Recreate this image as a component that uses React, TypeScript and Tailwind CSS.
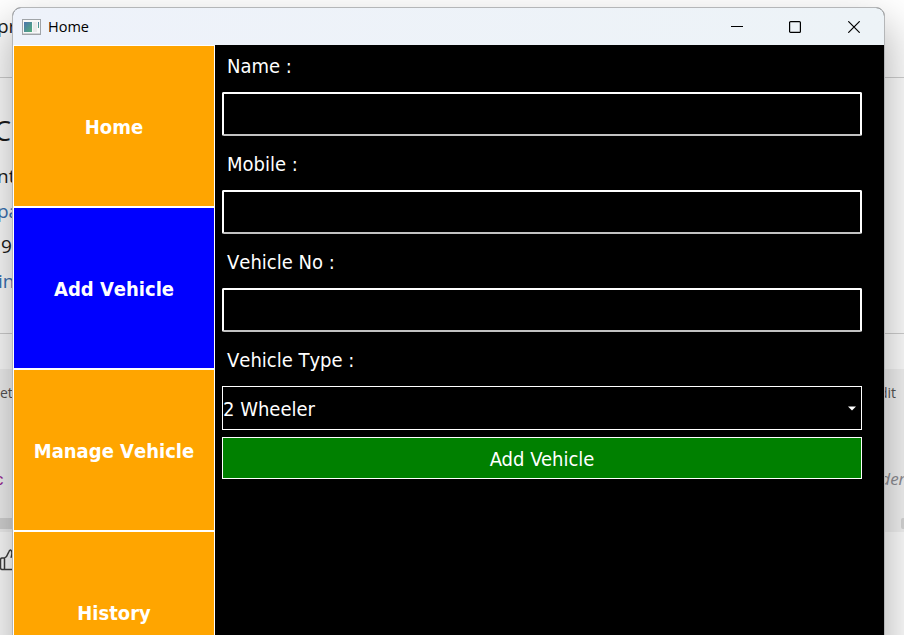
import React from 'react';

const ui = "[font-family:Open_Sans,Noto_Sans,sans-serif]";
const form = "[font-family:DejaVu_Sans_Condensed,DejaVu_Sans,sans-serif] [font-stretch:condensed] [font-kerning:none]";

function PageBehind() {
  return (
    <div className={`flex h-[635px] w-[904px] flex-col overflow-hidden bg-white whitespace-nowrap text-[#1b1b1b] ${ui}`}>
      <div className="h-[77px] pt-[13px] text-[19px] leading-[27px]"><span className="-ml-[3px]">pr</span></div>
      <div className="h-[257px] border-y border-[#d0d0d0] pt-[31px]">
        <div className="-ml-[6px] h-[50px] text-[27px] leading-[44px] font-medium">C</div>
        <div className="-ml-[3px] h-[35px] text-[19px] leading-[35px]">nt</div>
        <div className="-ml-[3px] h-[35px] text-[19px] leading-[35px] text-[#3b72b4]">pa</div>
        <div className="ml-[1px] h-[35px] text-[19px] leading-[35px]">9</div>
        <div className="-ml-[2px] h-[35px] text-[19px] leading-[35px] text-[#3b72b4]">in</div>
      </div>
      <div className="mt-[35px] flex h-[163px] flex-col bg-[#f3f3f3]">
        <div className="flex h-[46px] items-center justify-between pr-[8px] text-[14px] text-[#555]">
          <span>et</span><span>Edit</span>
        </div>
        <div className="mt-[53px] flex h-[22px] items-center justify-between">
          <span className="-ml-[6px] pt-[3px] [font-family:Liberation_Mono,monospace] text-[17px] text-[#9b1f95]">c</span>
          <span className="-mr-[10px] text-[17px] text-[#8e8e93] italic">dent</span>
        </div>
        <div className="mt-[28px] flex h-[11px] justify-between">
          <div className="w-[300px] bg-[#d6d6d6]" />
          <div className="w-[3px] rounded-l-[2px] bg-[#d6d6d6]" />
        </div>
      </div>
      <svg className="mt-[16px] ml-[-1px] h-[24px] w-[24px]" viewBox="0 0 24 24" fill="none" stroke="#3d3d3d" strokeWidth="1.500">
        <path d="M5.500 10H3Q1.500 10 1.500 12v7.500Q1.500 21.500 3 21.500h2.500zM5.500 10l2-1.500 2.500-5Q11 1 12.500 3q1 1.500-.2 6H20v12.500H5.500" />
      </svg>
    </div>
  );
}

function TitleBar() {
  return (
    <header className={`flex h-[37px] items-center bg-linear-to-r from-[#eef2fa] to-[#edf3f7] text-black ${ui}`}>
      <svg className="ml-[9px]" width="19" height="16" viewBox="0 0 19 16">
        <defs>
          <linearGradient id="pane" x1="0" y1="0" x2="1" y2="1">
            <stop stopColor="#4b73ae" /><stop offset="1" stopColor="#52ae79" />
          </linearGradient>
        </defs>
        <rect x=".5" y=".5" width="18" height="15" fill="#f8f8f8" stroke="#a0a4a8" />
        <rect x="2" y="3" width="8" height="10" fill="url(#pane)" />
        <path d="M11 3h4v10h-4z" fill="#e9e9e9" />
        <path d="M16 3h1v6h-1z" fill="url(#pane)" />
        <path d="M1 14.500h17" stroke="#d0d2d5" />
      </svg>
      <span className="ml-[7px] flex-1 text-[14.500px] leading-[20px]">Home</span>
      <svg className="mr-[46px]" width="12" height="12" viewBox="0 0 12 12"><path d="M0 5.500h12" stroke="#000" /></svg>
      <svg className="mr-[46px]" width="13" height="12" viewBox="0 0 13 12"><rect x=".6" y=".6" width="10.800" height="10.800" rx="1" fill="none" stroke="#000" strokeWidth="1.200" /></svg>
      <svg className="mr-[24px]" width="12" height="12" viewBox="0 0 12 12"><path d="M.3.3l11.400 11.400M11.700.3L.3 11.700" stroke="#000" strokeWidth="1.200" /></svg>
    </header>
  );
}

function NavItem({ label, active = false }: { label: string; active?: boolean }) {
  return (
    <button className={`flex h-[162px] w-full shrink-0 items-center justify-center border border-white pt-[1px] text-[20px] leading-[24px] font-bold text-white ${active ? 'bg-[#0000ff]' : 'bg-[#ffa500]'}`}>
      {label}
    </button>
  );
}

function Field({ label, children }: { label: string; children: React.ReactNode }) {
  return (
    <div className="flex h-[98px] flex-col">
      <label className="flex h-[54px] items-center pt-[2px] pl-[5px] text-[20px] leading-[24px]">{label}</label>
      {children}
    </div>
  );
}

function TextBox() {
  return <div className="h-[44px] rounded-[2px] border-2 border-white border-b-[#c2c2c2]" />;
}

export default function App() {
  return (
    <div className="relative h-[635px] w-[904px] overflow-hidden">
      <PageBehind />
      <div className="absolute top-[7px] left-[12px] flex h-[720px] w-[873px] flex-col overflow-hidden rounded-t-[9px] border border-[#b4b6b8] bg-black shadow-[0_22px_42px_6px_rgba(0,0,0,0.28)]">
        <TitleBar />
        <div className={`flex flex-1 text-white ${form}`}>
          <nav className="flex w-[202px] shrink-0 flex-col">
            <NavItem label="Home" />
            <NavItem label="Add Vehicle" active />
            <NavItem label="Manage Vehicle" />
            <NavItem label="History" />
          </nav>
          <main className="-mt-[7px] flex w-[647px] flex-col pl-[7px]">
            <Field label="Name :"><TextBox /></Field>
            <Field label="Mobile :"><TextBox /></Field>
            <Field label="Vehicle No :"><TextBox /></Field>
            <Field label="Vehicle Type :">
              <div className="flex h-[44px] items-center justify-between border border-white pr-[5px] text-[20px] leading-[24px]">
                <span className="pt-[1px]">2 Wheeler</span>
                <svg width="8" height="5" viewBox="0 0 8 5"><path d="M0 .5h8L4 4.500z" fill="#fff" /></svg>
              </div>
            </Field>
            <button className="mt-[7px] h-[42px] border border-white bg-[#008000] pt-[1px] text-[20px] leading-[24px] [font-kerning:normal]">Add Vehicle</button>
          </main>
        </div>
      </div>
    </div>
  );
}
